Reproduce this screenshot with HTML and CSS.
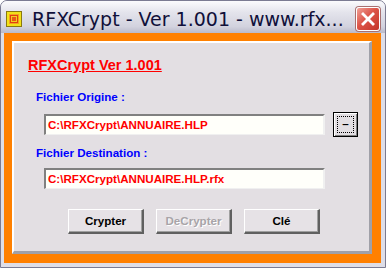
FILE: index.html
```html
<!DOCTYPE html>
<html lang="fr">
<head>
    <meta charset="UTF-8">
    <title>RFXCrypt - Ver 1.001</title>
    <link rel="stylesheet" href="styles.css">
</head>
<body>

<div class="window">
    <div class="titlebar">
        <svg class="app-icon" width="16" height="16" viewBox="0 0 16 16">
            <rect x="0.5" y="0.5" width="15" height="15" fill="#f2e21a" stroke="#8a7a10"/>
            <rect x="3" y="3" width="10" height="10" fill="#f5a020"/>
            <rect x="4.5" y="4.5" width="7" height="7" fill="#f0d020" stroke="#e04010"/>
            <rect x="6" y="6" width="4" height="4" fill="#e85a18"/>
        </svg>
        <div class="title-text">RFXCrypt - Ver 1.001 - www.rfx...</div>
        <div class="close-btn">
            <svg width="14" height="14" viewBox="0 0 14 14">
                <path d="M2 2 L12 12 M12 2 L2 12" stroke="#fff" stroke-width="2.8" stroke-linecap="square"/>
            </svg>
        </div>
    </div>

    <div class="client">
        <div class="panel">
            <div class="app-title">RFXCrypt Ver 1.001</div>

            <div class="field-label">Fichier Origine :</div>
            <div class="field-row">
                <div class="text-box">C:\RFXCrypt\ANNUAIRE.HLP</div>
                <div class="browse-btn"><span class="focus-rect">–</span></div>
            </div>

            <div class="field-label">Fichier Destination :</div>
            <div class="field-row">
                <div class="text-box">C:\RFXCrypt\ANNUAIRE.HLP.rfx</div>
            </div>

            <div class="button-row">
                <div class="btn">Crypter</div>
                <div class="btn disabled">DeCrypter</div>
                <div class="btn">Clé</div>
            </div>
        </div>
    </div>
</div>

</body>
</html>
```

FILE: styles.css
```css
body {
    margin: 0;
    background-color: #ffffff;
    font-family: "Liberation Sans", Arial, sans-serif;
}
.window {
    width: 386px;
    height: 268px;
    box-sizing: border-box;
    border: 1px solid #7b7b92;
    border-radius: 7px 7px 0 0;
    background-color: #dedee8;
    display: flex;
    flex-direction: column;
}
.titlebar {
    height: 32px;
    display: flex;
    align-items: center;
    padding: 0 5px 0 5px;
    background: linear-gradient(#fbfbfd 0%, #e4e4ec 35%, #d2d2de 80%, #babaca 100%);
    border-radius: 6px 6px 0 0;
}
.app-icon {
    margin-right: 10px;
    margin-top: 3px;
}
.title-text {
    flex: 1;
    font-family: "DejaVu Sans", sans-serif;
    font-size: 19px;
    color: #10103a;
    white-space: nowrap;
    margin-top: 3px;
}
.close-btn {
    width: 22px;
    height: 22px;
    border: 1px solid #ffffff;
    border-radius: 3px;
    background: linear-gradient(135deg, #f0a096 0%, #dc5448 45%, #c43428 100%);
    display: flex;
    align-items: center;
    justify-content: center;
    margin-top: 4px;
    box-shadow: 0 0 0 1px #a87070;
}
.client {
    flex: 1;
    margin: 0 4px 4px 3px;
    background-color: #ff8000;
    padding: 8px 9px 9px 8px;
    display: flex;
}
.panel {
    flex: 1;
    background-color: #e3dfe3;
    border-top: 2px solid #ffffff;
    border-left: 2px solid #ffffff;
    border-right: 3px solid #a0a0a8;
    border-bottom: 3px solid #a0a0a8;
    padding: 14px 0 0 14px;
    font-size: 11.6px;
    font-weight: bold;
}
.app-title {
    font-size: 14.5px;
    color: #ff0000;
    text-decoration: underline;
    line-height: 16px;
}
.field-label {
    color: #0000ff;
    line-height: 13px;
    margin: 17px 0 0 8px;
}
.field-row + .field-label {
    margin-top: 9px;
}
.field-label + .field-row {
    margin-top: 9px;
}
.field-row {
    display: flex;
    align-items: center;
    margin-left: 16px;
    gap: 8px;
}
.text-box {
    width: 275px;
    height: 18px;
    line-height: 18px;
    border-top: 2px solid #808080;
    border-left: 2px solid #808080;
    border-right: 2px solid #f0f0f0;
    border-bottom: 1px solid #f0f0f0;
    background-color: #fffffa;
    color: #ff0000;
    padding-left: 2px;
    box-sizing: content-box;
}
.browse-btn {
    width: 23px;
    height: 23px;
    border: 1px solid #000000;
    background-color: #e3dfe3;
    box-shadow: inset 1px 1px #ffffff, inset -1px -1px #808080;
    display: flex;
    align-items: center;
    justify-content: center;
}
.focus-rect {
    width: 15px;
    height: 15px;
    border: 1px dotted #000000;
    text-align: center;
    line-height: 14px;
    color: #000000;
}
.button-row {
    display: flex;
    gap: 12px;
    margin: 20px 0 0 40px;
}
.btn {
    width: 73px;
    height: 22px;
    line-height: 22px;
    text-align: center;
    color: #000000;
    background-color: #e6e2e6;
    border-top: 1px solid #ffffff;
    border-left: 1px solid #ffffff;
    border-right: 2px solid #606060;
    border-bottom: 2px solid #606060;
    box-shadow: inset -1px -1px #a0a0a0;
}
.btn.disabled {
    color: #a8a4a8;
    text-shadow: 1px 1px #ffffff;
}
```
